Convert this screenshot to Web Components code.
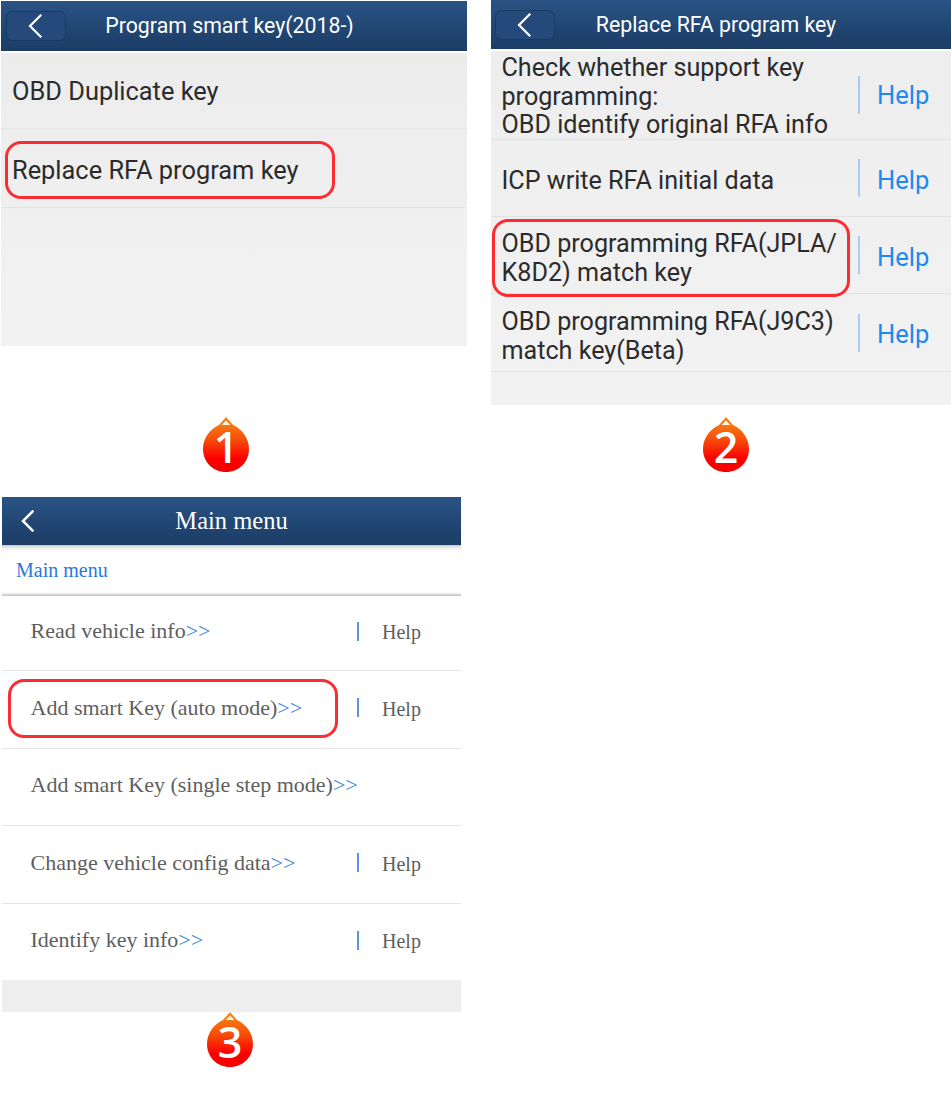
<!DOCTYPE html>
<html><head><meta charset="utf-8"><title>Program smart key</title>
<style>
html,body{margin:0;background:#fff}
body{width:951px;height:1099px;overflow:hidden}
</style></head><body>
<step-sheet>
<step-column>
  <screen-panel style="--w:466px;--ph:345px;margin:1px 0 0 1px;--bg:linear-gradient(#ebebeb,#f2f2f2);--row-font:25.4px/30px Roboto,'Noto Sans',sans-serif;--pad:11px;--text-top:4px">
    <app-bar style="--bar-h:50px;--t-shift:74px">Program smart key(2018-)</app-bar>
    <menu-row style="height:78px;border-top:2px solid #fff;--text-top:0px">OBD Duplicate key</menu-row>
    <menu-row ring="4,12,330,58" style="height:79px">Replace RFA program key</menu-row>
  </screen-panel>
  <step-badge style="margin:71px 0 0 203px">1</step-badge>
  <screen-panel style="--w:459px;--ph:515px;margin:25px 0 0 2px;--bg:#eeeeee;--line:#e4e4e4;--row-bg:#fff;--row-pb:4px;--row-font:22px/26px 'Liberation Serif',serif;--ink:#5e5e5e;--pad:28.5px;--sep:#5b95d8;--sep-h:19px;--sep-gap:23px;--help-w:79px;--help-top:2px;--help:#5e5e5e;--help-font:20px/24px 'Liberation Serif',serif;">
    <app-bar plain style="--bar-h:48px;--bar-font:24.5px/1 'Liberation Serif',serif">Main menu</app-bar>
    <bread-crumb>Main menu</bread-crumb>
    <menu-row help more style="height:75px">Read vehicle info</menu-row>
    <menu-row help more ring="6,8,330,59" style="height:78px">Add smart Key (auto mode)</menu-row>
    <menu-row more style="height:77px">Add smart Key (single step mode)</menu-row>
    <menu-row help more style="height:78px">Change vehicle config data</menu-row>
    <menu-row help more style="height:76px;border:0">Identify key info</menu-row>
  </screen-panel>
  <step-badge style="margin:0 0 0 207px">3</step-badge>
</step-column>
<step-column>
  <screen-panel style="--w:460px;--ph:405px;--bg:linear-gradient(#ededed,#f2f2f2);--row-font:25.15px/28.7px Roboto,'Noto Sans',sans-serif;--pad:10.5px;--text-top:8px;--sep-h:38px;--sep-gap:17px;--help-w:74px;--help-top:3px;--help-font:25.5px/30px Roboto,'Noto Sans',sans-serif">
    <app-bar style="--bar-h:49px;--t-shift:75px;--back-ml:4px">Replace RFA program key</app-bar>
    <menu-row help style="height:91px;border-top:2px solid #fff;--help-top:0px;--text-top:4px">Check whether support key<br>programming:<br>OBD identify original RFA info</menu-row>
    <menu-row help style="height:77px;--text-top:6px">ICP write RFA initial data</menu-row>
    <menu-row help ring="1,2,358,78" style="height:77px">OBD programming RFA(JPLA/<br>K8D2) match key</menu-row>
    <menu-row help style="height:78px">OBD programming RFA(J9C3)<br>match key(Beta)</menu-row>
  </screen-panel>
  <step-badge style="margin:12px 0 0 212px">2</step-badge>
</step-column>
</step-sheet>
<script>
class Base extends HTMLElement{
  constructor(){super();this.attachShadow({mode:'open'});}
  connectedCallback(){this.shadowRoot.innerHTML='<style>'+this.constructor.css+'</style>'+this.render();}
  render(){return '<slot></slot>';}
}
const chev=(w,h,sw)=>`<svg width="${w}" height="${h}" viewBox="0 0 ${w} ${h}" fill="none"><path d="M${w-1.5} 1.5 L2 ${h/2} L${w-1.5} ${h-1.5}" stroke="#fff" stroke-width="${sw}" stroke-linecap="square"/></svg>`;

class AppBar extends Base{
  static css=`:host{display:flex;align-items:center;position:relative;box-sizing:border-box;height:var(--bar-h,50px);
    background:linear-gradient(#2a5384,#1b3c65);color:#fff;font:var(--bar-font,21.3px/1 Roboto,"Noto Sans",sans-serif);flex:none}
    .back{flex:none;box-sizing:border-box;width:60px;height:30px;margin-left:var(--back-ml,5px);margin-right:calc(5px - var(--back-ml,5px));border:1px solid #1a3a62;border-radius:7px;background:#24497a;display:flex;align-items:center;justify-content:center;padding-right:2px}
    :host([plain]) .back{background:none;border:0;width:auto;margin:0 0 0 19px;padding:0}
    .t{flex:1;margin-right:var(--t-shift,0);text-align:center;white-space:nowrap}
    :host([plain]) .t{position:absolute;left:0;right:0;margin:0}`;
  render(){return `<div class="back">${this.hasAttribute('plain')?chev(13,22,2.5):chev(14,24,2.2)}</div><div class="t"><slot></slot></div>`;}
}
customElements.define('app-bar',AppBar);

class MenuRow extends Base{
  static css=`:host{display:flex;align-items:center;position:relative;box-sizing:border-box;border-bottom:1px solid var(--line,#e3e3e3);background:var(--row-bg,transparent);
      padding:0 0 var(--row-pb,0) var(--pad,11px);font:var(--row-font);color:var(--ink,#2b2b2b);flex:none}
    .l{flex:1;min-width:0;margin-top:var(--text-top,0)}
    .m{color:#3d86dc}
    .sep{flex:none;width:2px;height:var(--sep-h);background:var(--sep,#a7cdf3);margin-right:var(--sep-gap)}
    .h{flex:none;width:var(--help-w);color:var(--help,#1e88ee);font:var(--help-font);margin-top:var(--help-top,0)}
    .ring{position:absolute;box-sizing:border-box;border:3.5px solid #fb2d33;border-radius:16px;pointer-events:none}`;
  render(){
    const help=this.hasAttribute('help');
    const more=this.hasAttribute('more');
    const r=this.getAttribute('ring');
    let ring='';
    if(r){const [l,t,w,h]=r.split(',');ring=`<div class="ring" style="left:${l}px;top:${t}px;width:${w}px;height:${h}px"></div>`;}
    return `<div class="l"><slot></slot>${more?'<span class="m">&gt;&gt;</span>':''}</div>`+
      (help?`<div class="sep"></div><div class="h">Help</div>`:'')+ring;
  }
}
customElements.define('menu-row',MenuRow);

class ScreenPanel extends Base{
  static css=`:host{display:flex;flex-direction:column;box-sizing:border-box;width:var(--w);height:var(--ph);background:var(--bg,#eeeeee)}`;
}
customElements.define('screen-panel',ScreenPanel);

class Crumb extends Base{
  static css=`:host{display:flex;align-items:center;box-sizing:border-box;height:51px;padding:0 0 2px 14px;background:#fff;color:#2a78dc;
    font:20px/1 "Liberation Serif",serif;box-shadow:inset 0 6px 5px -5px #aaa, inset 0 -3px 2px -1px #c8c8c8;flex:none}`;
}
customElements.define('bread-crumb',Crumb);

class StepBadge extends Base{
  static css=`:host{display:block;position:relative;width:46px;height:55px;flex:none}
    svg{display:block}
    .n{position:absolute;left:0;right:0;top:8px;text-align:center;color:#fff;font:600 43px/43px "Open Sans",sans-serif}`;
  render(){const id='g'+this.textContent.trim();
    return `<svg width="46" height="55" viewBox="0 0 46 55"><defs><linearGradient id="${id}" x1="0" y1="0" x2="0" y2="1"><stop offset="0" stop-color="#f88a14"/><stop offset=".4" stop-color="#f6500a"/><stop offset=".75" stop-color="#fc0000"/><stop offset="1" stop-color="#f40000"/></linearGradient></defs>
    <path d="M23 0 L30 8 C39 12 46 21 46 32 C46 45 36 55 23 55 C10 55 0 45 0 32 C0 21 7 12 16 8 Z" fill="url(#${id})"/><path d="M23 3.5 L27.5 8 H18.5 Z" fill="#fff3e4"/></svg><div class="n"><slot></slot></div>`;}
}
customElements.define('step-badge',StepBadge);

class StepColumn extends Base{
  static css=`:host{display:flex;flex-direction:column;align-items:flex-start;position:relative}`;
}
customElements.define('step-column',StepColumn);

class StepSheet extends Base{
  static css=`:host{display:grid;grid-template-columns:491px 460px;width:951px;height:1099px}`;
}
customElements.define('step-sheet',StepSheet);
</script>
</body></html>
